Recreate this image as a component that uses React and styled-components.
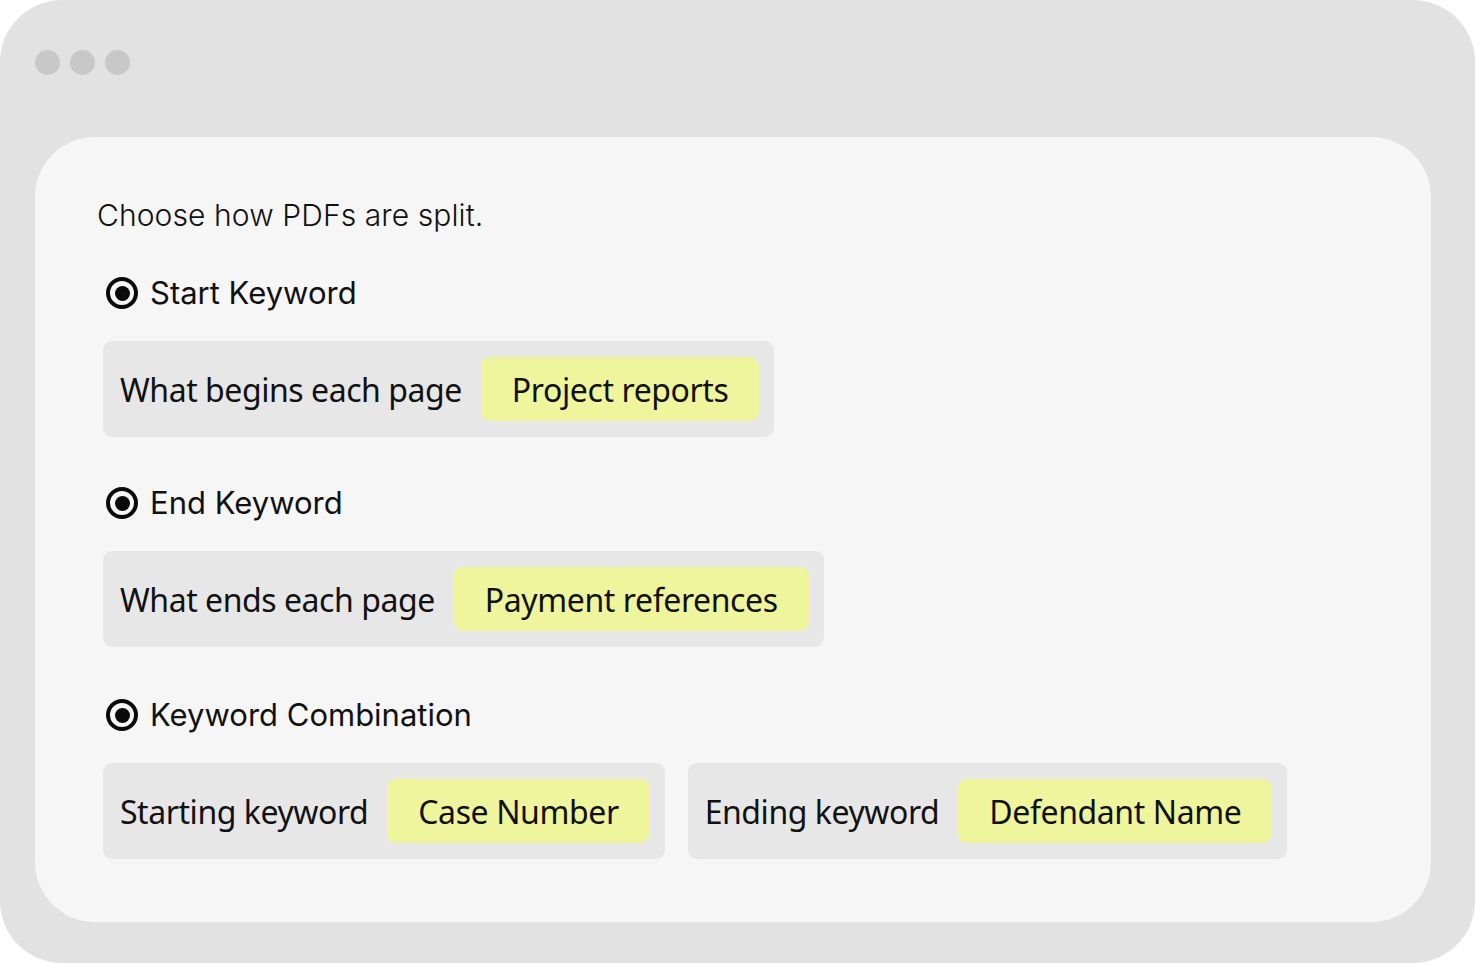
import React from "react";
import styled, { createGlobalStyle } from "styled-components";

const Global = createGlobalStyle`
  html, body {
    margin: 0;
    padding: 0;
    background: #ffffff;
  }
  body {
    font-family: "Inter", "Liberation Sans", sans-serif;
    color: #111;
  }
`;

const Frame = styled.div`
  width: 1475px;
  height: 963px;
  box-sizing: border-box;
  background: #e3e2e3;
  border-radius: 62px;
  padding: 50px 44px 41px 35px;
  display: flex;
  flex-direction: column;
`;

const Dots = styled.div`
  display: flex;
  gap: 10px;
  height: 25px;
  margin-bottom: 62px;
`;

const Dot = styled.span`
  width: 25px;
  height: 25px;
  border-radius: 50%;
  background: #c9c8c9;
`;

const Panel = styled.div`
  flex: 1;
  background: #f7f6f7;
  border-radius: 60px;
  padding: 60px 62px 0;
  display: flex;
  flex-direction: column;
`;

const Intro = styled.p`
  margin: 0 0 42px;
  font-family: "Inter", "Liberation Sans", sans-serif;
  font-weight: 300;
  font-size: 30px;
  letter-spacing: 0.1px;
  color: #111;
`;

const Option = styled.label`
  display: flex;
  align-items: center;
  gap: 12px;
  margin: 0 0 ${(p) => p.$after}px 9px;
  font-family: "Inter", "Liberation Sans", sans-serif;
  font-size: 31px;
  font-weight: 400;
  line-height: 36px;
  color: #111;
`;

const Radio = styled.span`
  width: 32px;
  height: 32px;
  box-sizing: border-box;
  border: 4px solid #0a0a0a;
  border-radius: 50%;
  display: flex;
  align-items: center;
  justify-content: center;

  &::after {
    content: "";
    width: 15px;
    height: 15px;
    border-radius: 50%;
    background: #0a0a0a;
  }
`;

const Row = styled.div`
  display: flex;
  gap: 23px;
  margin: 0 0 ${(p) => p.$after}px 6px;
`;

const Field = styled.div`
  display: flex;
  align-items: center;
  gap: 19px;
  height: 96px;
  box-sizing: border-box;
  padding: 0 15px 0 17px;
  background: #e8e7e8;
  border-radius: 9px;
`;

const Label = styled.span`
  font-family: "Noto Sans", "Liberation Sans", sans-serif;
  font-size: 32px;
  letter-spacing: -0.45px;
  color: #111;
  white-space: nowrap;
`;

const Chip = styled.span`
  height: 64px;
  display: flex;
  align-items: center;
  padding: 0 31px;
  background: #eef59d;
  border-radius: 9px;
  font-family: "Noto Sans", "Liberation Sans", sans-serif;
  font-size: 32px;
  letter-spacing: -0.4px;
  color: #111;
  white-space: nowrap;
`;

const options = [
  {
    title: "Start Keyword",
    after: 48,
    fields: [{ label: "What begins each page", value: "Project reports" }],
  },
  {
    title: "End Keyword",
    after: 50,
    fields: [{ label: "What ends each page", value: "Payment references" }],
  },
  {
    title: "Keyword Combination",
    after: 0,
    fields: [
      { label: "Starting keyword", value: "Case Number" },
      { label: "Ending keyword", value: "Defendant Name" },
    ],
  },
];

const App = () => {
  return (
    <>
      <Global />
      <Frame>
        <Dots>
          <Dot />
          <Dot />
          <Dot />
        </Dots>
        <Panel>
          <Intro>Choose how PDFs are split.</Intro>
          {options.map((opt) => (
            <React.Fragment key={opt.title}>
              <Option $after={30}>
                <Radio />
                {opt.title}
              </Option>
              <Row $after={opt.after}>
                {opt.fields.map((f) => (
                  <Field key={f.label}>
                    <Label>{f.label}</Label>
                    <Chip>{f.value}</Chip>
                  </Field>
                ))}
              </Row>
            </React.Fragment>
          ))}
        </Panel>
      </Frame>
    </>
  );
};

export default App;
